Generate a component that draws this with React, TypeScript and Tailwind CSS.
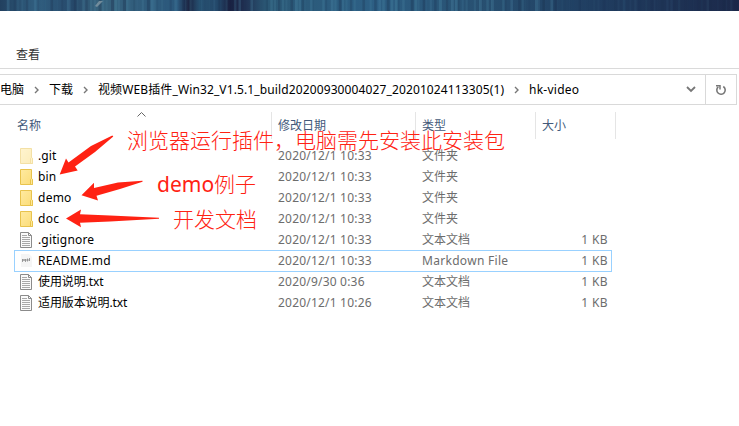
import React from "react";

const sans = "font-['Noto_Sans','Noto_Sans_CJK_SC',sans-serif]";

type Kind = "hidden" | "folder" | "text" | "md";
type Row = { name: string; tracking: string; kind: Kind; date: string; type: string; size?: string };

const rows: Row[] = [
  { name: ".git", tracking: "tracking-[0.1px]", kind: "hidden", date: "2020/12/1 10:33", type: "文件夹" },
  { name: "bin", tracking: "tracking-[0.1px]", kind: "folder", date: "2020/12/1 10:33", type: "文件夹" },
  { name: "demo", tracking: "tracking-[0.25px]", kind: "folder", date: "2020/12/1 10:33", type: "文件夹" },
  { name: "doc", tracking: "tracking-[0.25px]", kind: "folder", date: "2020/12/1 10:33", type: "文件夹" },
  { name: ".gitignore", tracking: "tracking-[0.15px]", kind: "text", date: "2020/12/1 10:33", type: "文本文档", size: "1 KB" },
  { name: "README.md", tracking: "tracking-[0.35px]", kind: "md", date: "2020/12/1 10:33", type: "Markdown File", size: "1 KB" },
  { name: "使用说明.txt", tracking: "tracking-[-0.1px]", kind: "text", date: "2020/9/30 0:36", type: "文本文档", size: "1 KB" },
  { name: "适用版本说明.txt", tracking: "tracking-[-0.1px]", kind: "text", date: "2020/12/1 10:26", type: "文本文档", size: "1 KB" },
];

function FileIcon({ kind }: { kind: Kind }) {
  if (kind === "hidden" || kind === "folder") {
    return (
      <svg width="14" height="16" viewBox="0 0 14 16" className={kind === "hidden" ? "opacity-50" : ""}>
        <defs>
          <linearGradient id="folder" x1="0" y1="0" x2="1" y2="1">
            <stop offset="0" stopColor="#ffeaa0" />
            <stop offset="1" stopColor="#fbdc78" />
          </linearGradient>
        </defs>
        <path d="M.5.5h11v9l1 .8v5.2H.5z" fill="url(#folder)" stroke="#e8c34d" />
        <path d="M10.5 15.5v-5l1-1 1 1v5z" fill="#ffe996" stroke="#e8c34d" />
      </svg>
    );
  }
  if (kind === "text") {
    return (
      <svg width="14" height="16" viewBox="0 0 14 16" fill="none">
        <path d="M.5.5h8l3 3v12H.5z" fill="#fafafa" stroke="#8b8b8b" />
        <path d="M8.5.5v3h3" stroke="#8b8b8b" />
        <path d="M2 3.5h5M2 5.5h8M2 7.5h8M2 9.5h8M2 11.5h8M2 13.5h8" stroke="#a8a8a8" />
      </svg>
    );
  }
  return (
    <svg width="14" height="16" viewBox="0 0 14 16" fill="none">
      <path d="M1 1h8l3 3v10H1z" fill="#f5f5f5" />
      <path d="M2.5 6v3M4 6v2M5.500 6v3M7.500 5.500v3M9.500 5v3M2 7h8" stroke="#888" strokeWidth=".8" />
    </svg>
  );
}

const Chevron = ({ className }: { className: string }) => (
  <svg width="5" height="8" viewBox="0 0 5 8" fill="none" className={`shrink-0 ${className}`}>
    <path d="M1 1l3 3-3 3" stroke="#777" strokeWidth="1.4" />
  </svg>
);

function Banner() {
  const bars = Array.from({ length: 185 }, (_, i) => {
    const n = Math.abs(Math.sin(i * 12.9898) * 43758.5453) % 1;
    return { x: i * 4 + n * 3, w: 1 + n * 2, o: n * 0.28, light: i % 3 !== 0 };
  });
  return (
    <svg width="739" height="11" className="block shrink-0">
      <defs>
        <linearGradient id="sky">
          <stop offset="0" stopColor="#22405f" />
          <stop offset=".05" stopColor="#315f80" />
          <stop offset=".1" stopColor="#26486a" />
          <stop offset=".13" stopColor="#37627c" />
          <stop offset=".24" stopColor="#2b587c" />
          <stop offset=".255" stopColor="#1d2745" />
          <stop offset=".27" stopColor="#265070" />
          <stop offset=".295" stopColor="#24486a" />
          <stop offset=".31" stopColor="#1a2242" />
          <stop offset=".33" stopColor="#1f2e50" />
          <stop offset=".36" stopColor="#2b5875" />
          <stop offset=".5" stopColor="#2d5f84" />
          <stop offset=".65" stopColor="#285071" />
          <stop offset=".8" stopColor="#203e61" />
          <stop offset="1" stopColor="#1c294a" />
        </linearGradient>
      </defs>
      <rect width="739" height="11" fill="url(#sky)" />
      {bars.map((b, i) => (
        <rect key={i} x={b.x} width={b.w} height="11" fill={b.light ? "#5597b4" : "#14213f"} opacity={b.x > 560 ? b.o / 2.5 : b.o} />
      ))}
      <path d="M95 6l4-5h4l-6 6z" fill="#8298a5" opacity=".8" />
    </svg>
  );
}

export default function App() {
  return (
    <div className={`relative flex h-[426px] w-[739px] flex-col overflow-hidden bg-white text-[12px] leading-none text-black ${sans}`}>
      <Banner />
      <div className="flex h-[58px] shrink-0 items-end border-b border-[#dadada] pb-[6px] pl-4 leading-[14px] text-[#333]">查看</div>
      <div className="mt-[5px] mr-[2px] flex h-[31px] shrink-0 items-center border border-l-0 border-[#d9d9d9]">
        <span className="w-6 whitespace-nowrap">电脑</span>
        <Chevron className="ml-[10px]" />
        <span className="ml-[10px] w-6 whitespace-nowrap">下载</span>
        <Chevron className="ml-[10px]" />
        <span className="ml-[10px] w-[406px] whitespace-nowrap tracking-[0.12px]">视频WEB插件_Win32_V1.5.1_build20200930004027_20201024113305(1)</span>
        <Chevron className="ml-[10px]" />
        <span className="ml-[10px] whitespace-nowrap tracking-[0.25px]">hk-video</span>
        <svg width="10" height="7" viewBox="0 0 10 7" fill="none" className="ml-auto mr-[9px]">
          <path d="M1 1l4 4 4-4" stroke="#777" strokeWidth="1.8" />
        </svg>
        <div className="flex h-full w-[31px] items-center justify-center border-l border-[#d9d9d9]">
          <svg width="12" height="12" viewBox="0 0 12 12" fill="none">
            <path d="M3.300 2.800A4.200 4.200 0 1 0 8.300 2.500" stroke="#777" strokeWidth="1.600" />
            <path d="M1 1.700h4V5.500" stroke="#777" strokeWidth="1.500" />
          </svg>
        </div>
      </div>
      <div className="mt-[7px] flex h-[27px] shrink-0 text-[#43597a]">
        <div className="flex w-[272px] items-center border-r border-[#e5e5e5] pl-[17px]">
          名称
          <svg width="9" height="5" viewBox="0 0 9 5" fill="none" className="mb-[22px] ml-24">
            <path d="M.5 4.5l4-4 4 4" stroke="#666" />
          </svg>
        </div>
        <div className="flex w-36 items-center border-r border-[#e5e5e5] pl-[6px]">修改日期</div>
        <div className="flex w-[120px] items-center border-r border-[#e5e5e5] pl-[6px]">类型</div>
        <div className="flex w-20 items-center border-r border-[#e5e5e5] pl-[6px]">大小</div>
      </div>
      <div className="mt-[6px] ml-[14px] flex w-[598px] flex-col">
        {rows.map((r) => (
          <div key={r.name} className={`flex shrink-0 items-center ${r.kind === "md" ? "-mb-px h-[22px] outline outline-1 -outline-offset-1 outline-[#99d1ff]" : "h-[21px]"}`}>
            <div className="flex w-[264px] items-center gap-1 pl-[6px]">
              <FileIcon kind={r.kind} />
              <span className={r.tracking}>{r.name}</span>
            </div>
            <span className="w-36 tracking-[0.2px] text-[#6d6d6d]">{r.date}</span>
            <span className={`w-[120px] text-[#6d6d6d] ${r.kind === "md" ? "tracking-[0.3px]" : ""}`}>{r.type}</span>
            <span className="ml-auto pr-1 tracking-[0.4px] text-[#6d6d6d]">{r.size}</span>
          </div>
        ))}
      </div>
      <svg width="739" height="426" className="pointer-events-none absolute inset-0" fill="#ff2213">
        <path d="M112.300 135.500L91 146L68.500 162.500L66 158.500L59.700 174.500L77.700 170.500L75 166.500L95 152L113.300 136.500Z" />
        <path d="M142.500 180.700L118 182.500L94 188L94 182.700L81.500 195.300L98 200.500L96.500 195.700L120 189L142.500 181.700Z" />
        <path d="M159 217.800L110 215.500L80 214.300L81 209.500L66 218.500L81 227.300L80 222.700L110 221.500L159 218.700Z" />
      </svg>
      <div className="absolute left-[127px] top-[128px] whitespace-nowrap text-[21px] font-light leading-6 text-[#ff2213]">浏览器运行插件，电脑需先安装此安装包</div>
      <div className="absolute left-[157px] top-[172px] whitespace-nowrap text-[21px] leading-6 text-[#ff2213]">demo<span className="font-light">例子</span></div>
      <div className="absolute left-[173px] top-[207px] whitespace-nowrap text-[21px] font-light leading-6 text-[#ff2213]">开发文档</div>
    </div>
  );
}
